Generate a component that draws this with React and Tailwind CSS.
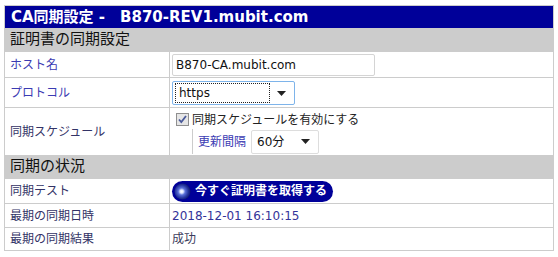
import React from 'react'

// 設定テーブルの行
const Row = ({ label, labelClass = 'text-[#333366]', className = '', children }) => (
  <div className={`flex border-t border-[#cccccc] ${className}`}>
    <div className={`w-[165px] shrink-0 border-r border-[#cccccc] pl-[5px] flex items-center ${labelClass}`}>{label}</div>
    <div className="flex-1 pl-[2px] flex items-center">{children}</div>
  </div>
)

const Section = ({ children }) => (
  <div className="h-[23px] bg-[#cccccc] pl-[5px] flex items-center text-[15px] text-[#111]">{children}</div>
)

const Arrow = () => (
  <svg width="9" height="5" viewBox="0 0 9 5" className="shrink-0">
    <path d="M0 0h9L4.5 5z" fill="#222" />
  </svg>
)

const Checkbox = () => (
  <span className="w-[13px] h-[13px] border border-[#8f8f8f] bg-[#e6e6e6] flex items-center justify-center shrink-0">
    <svg width="11" height="11" viewBox="0 0 11 11">
      <path d="M2 5.5l2.3 2.6L9 2" fill="none" stroke="#4a5a9a" strokeWidth="1.8" />
    </svg>
  </span>
)

const Orb = () => (
  <svg width="17" height="17" viewBox="0 0 17 17" className="shrink-0">
    <defs>
      <radialGradient id="orb" cx="45%" cy="50%" r="55%">
        <stop offset="0%" stopColor="#ffffff" />
        <stop offset="18%" stopColor="#dfe6ff" />
        <stop offset="40%" stopColor="#5a6fd8" />
        <stop offset="75%" stopColor="#23329c" />
        <stop offset="100%" stopColor="#0c1470" />
      </radialGradient>
    </defs>
    <circle cx="8.5" cy="8.5" r="8" fill="url(#orb)" />
  </svg>
)

export default function App() {
  return (
    <div className="pl-[4px] pt-[5px] bg-white font-['DejaVu_Sans','Noto_Sans_CJK_JP',sans-serif] text-[12px] leading-none">
      <div className="w-[550px] border border-[#cccccc]">
        <div className="h-[22px] bg-[#000099] text-white font-bold text-[15px] pl-[6px] flex items-center whitespace-pre">
          CA同期設定 -　B870-REV1.mubit.com
        </div>
        <Section>証明書の同期設定</Section>
        <Row label="ホスト名" labelClass="text-[#3b3bb3]" className="h-[26px]">
          <div className="w-[203px] h-[22px] border border-[#d4d4d4] rounded-[2px] flex items-center pl-[3px] text-[#111]">
            B870-CA.mubit.com
          </div>
        </Row>
        <Row label="プロトコル" labelClass="text-[#3b3bb3]" className="h-[30px]">
          <div className="w-[123px] h-[24px] border border-[#7eb4ea] rounded-[2px] flex items-center pl-[2px] pr-[8px] gap-[7px] mt-[1px]">
            <span className="flex-1 h-[20px] border border-dotted border-[#222] flex items-center pl-[3px] text-[#111]">https</span>
            <Arrow />
          </div>
        </Row>
        <Row label="同期スケジュール" className="h-[48px]">
          <div className="flex flex-col pl-[4px] pt-[1px]">
            <div className="flex items-center gap-[3px] h-[19px] text-[#222]">
              <Checkbox />
              <span>同期スケジュールを有効にする</span>
            </div>
            <div className="flex items-center h-[25px] ml-[16px] border-l border-[#cccccc] pl-[5px] gap-[5px]">
              <span className="text-[#3b3bb3]">更新間隔</span>
              <div className="w-[68px] h-[24px] border border-[#dddddd] rounded-[2px] flex items-center pl-[5px] pr-[8px] justify-between text-[#111]">
                <span>60分</span>
                <Arrow />
              </div>
            </div>
          </div>
        </Row>
        <Section>同期の状況</Section>
        <Row label="同期テスト" className="h-[25px]">
          <button className="h-[21px] rounded-full bg-[#000099] text-white font-bold flex items-center pl-[2px] pr-[6px] gap-[4px] cursor-pointer">
            <Orb />
            今すぐ証明書を取得する
          </button>
        </Row>
        <Row label="最期の同期日時" className="h-[24px]">
          <span className="text-[#333399]">2018-12-01 16:10:15</span>
        </Row>
        <Row label="最期の同期結果" className="h-[23px]">
          <span className="text-[#3c3c5c]">成功</span>
        </Row>
      </div>
    </div>
  )
}
